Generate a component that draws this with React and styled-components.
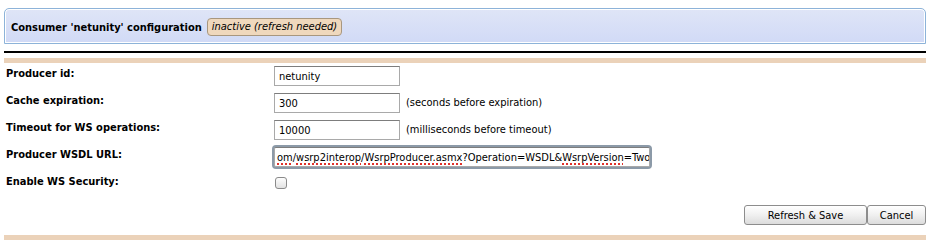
import React from "react";
import styled, { createGlobalStyle } from "styled-components";

const Global = createGlobalStyle`
  html, body { margin: 0; padding: 0; background: #fff; }
  body { font-family: "DejaVu Sans Condensed", "DejaVu Sans", sans-serif; font-size: 11px; color: #000; }
`;

const Page = styled.div`
  width: 922px;
  margin-left: 4px;
  padding-top: 8px;
`;

const Header = styled.div`
  box-sizing: border-box;
  height: 36px;
  border: 1px solid #8db3d9;
  border-radius: 5px 5px 0 0;
  box-shadow: inset 0 0 0 1px #fff;
  background: linear-gradient(#dfe5f7, #d1daf6);
  display: flex;
  align-items: center;
  gap: 5px;
  padding: 2px 0 0 6px;
`;

const Title = styled.span`
  font-weight: bold;
`;

const Badge = styled.span`
  background: #efd8bd;
  border: 1px solid #a8977f;
  border-radius: 4px;
  padding: 1px 4px 2px;
  font-style: italic;
`;

const Rule = styled.div`
  height: 2px;
  background: #000;
  margin-top: 7px;
`;

const TanBar = styled.div`
  height: 5px;
  background: #ebd2b9;
  margin-top: ${p => p.$top}px;
`;

const Form = styled.div`
  display: grid;
  grid-template-columns: 268px 1fr;
  grid-auto-rows: 27px;
  padding-left: 2px;
  margin-top: 3px;
`;

const Label = styled.div`
  font-weight: bold;
  padding-top: 1px;
`;

const Field = styled.div`
  display: flex;
  align-items: flex-start;
  gap: 6px;
  line-height: 20px;
`;

const Input = styled.div`
  box-sizing: border-box;
  width: ${p => p.$w}px;
  height: 20px;
  line-height: 18px;
  border: 1px solid #a9a9a9;
  border-top-color: #7d7d7d;
  background: #fff;
  padding: 1px 4px 0;
  white-space: nowrap;
  overflow: hidden;
  ${p => p.$focus && `
    box-shadow: 0 0 0 2px #8c9aa8;
    border-radius: 2px;
    padding-left: 2px;
  `}
`;

const Spell = styled.span`
  text-decoration: underline dotted #e0312b;
  text-decoration-thickness: 2px;
  text-underline-offset: 2px;
`;

const Hint = styled.span``;

const Checkbox = styled.span`
  display: inline-block;
  box-sizing: border-box;
  width: 12px;
  height: 12px;
  margin: 3px 0 0 1px;
  border: 1px solid #8a8a8a;
  border-radius: 3px;
  background: linear-gradient(#fdfdfd, #e2e2e2);
`;

const Actions = styled.div`
  display: flex;
  justify-content: flex-end;
  margin-top: 4px;
`;

const Button = styled.button`
  font-family: inherit;
  font-size: 11px;
  height: 20px;
  width: ${p => p.$w}px;
  border: 1px solid #8d8d8d;
  border-radius: 3px;
  background: linear-gradient(#ffffff, #f0f0f0 50%, #dcdcdc);
  color: #000;
  padding: 0;
`;

export default function App() {
  return (
    <>
      <Global />
      <Page>
        <Header>
          <Title>Consumer 'netunity' configuration</Title>
          <Badge>inactive (refresh needed)</Badge>
        </Header>
        <Rule />
        <TanBar $top={5} />
        <Form>
          <Label>Producer id:</Label>
          <Field><Input $w={126}>netunity</Input></Field>
          <Label>Cache expiration:</Label>
          <Field><Input $w={126}>300</Input><Hint>(seconds before expiration)</Hint></Field>
          <Label>Timeout for WS operations:</Label>
          <Field><Input $w={126}>10000</Input><Hint>(milliseconds before timeout)</Hint></Field>
          <Label>Producer WSDL URL:</Label>
          <Field>
            <Input $w={376} $focus>
              <Spell>om</Spell>/<Spell>wsrp2interop</Spell>/<Spell>WsrpProducer.asmx</Spell>?Operation=WSDL&amp;<Spell>WsrpVersion</Spell>=Two
            </Input>
          </Field>
          <Label>Enable WS Security:</Label>
          <Field><Checkbox /></Field>
        </Form>
        <Actions>
          <Button $w={123}>Refresh &amp; Save</Button>
          <Button $w={59}>Cancel</Button>
        </Actions>
        <TanBar $top={10} />
      </Page>
    </>
  );
}
